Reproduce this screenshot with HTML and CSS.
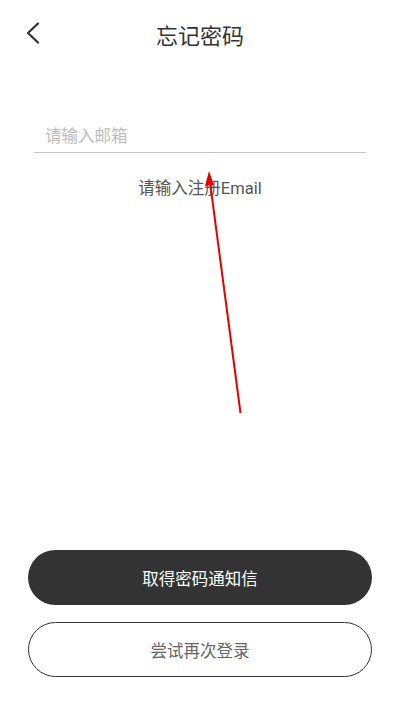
FILE: index.html
```html
<!DOCTYPE html>
<html lang="zh-CN">

<head>
    <meta charset="UTF-8">
    <meta name="viewport" content="width=device-width, initial-scale=1.0">
    <title>忘记密码</title>
    <link rel="stylesheet" href="styles.css">
</head>

<body>
    <div class="page">
        <div class="header">
            <button class="back" aria-label="返回">
                <svg width="14" height="22" viewBox="0 0 14 22">
                    <path d="M12 1.5 L2 11 L12 20.5" fill="none" stroke="#333" stroke-width="2.2" stroke-linecap="round" stroke-linejoin="round"/>
                </svg>
            </button>
            <h1>忘记密码</h1>
        </div>

        <div class="form">
            <input type="text" class="email" placeholder="请输入邮箱">
            <p class="hint">请输入注册Email</p>
        </div>

        <div class="actions">
            <button class="btn primary">取得密码通知信</button>
            <button class="btn outline">尝试再次登录</button>
        </div>

        <!-- annotation arrow drawn over the screen -->
        <svg class="arrow" width="400" height="711" viewBox="0 0 400 711">
            <line x1="240.5" y1="413" x2="210" y2="182" stroke="#e60000" stroke-width="2"/>
            <polygon points="209,171 205,186 214,185" fill="#e60000"/>
        </svg>
    </div>
</body>

</html>
```

FILE: styles.css
```css
* {
    box-sizing: border-box;
}

body {
    margin: 0;
    font-family: Roboto, "Noto Sans CJK SC", sans-serif;
    background: #fff;
    color: #333;
}

.page {
    position: relative;
    width: 400px;
    height: 711px;
    display: flex;
    flex-direction: column;
}

.header {
    position: relative;
    height: 68px;
    display: flex;
    align-items: center;
    justify-content: center;
}

.header h1 {
    margin: 0;
    font-size: 22px;
    font-weight: 400;
    color: #333;
}

.back {
    position: absolute;
    left: 26px;
    top: 22px;
    padding: 0;
    border: none;
    background: none;
    line-height: 0;
}

.form {
    padding: 0 34px;
    margin-top: 49px;
}

.email {
    display: block;
    width: 100%;
    height: 36px;
    padding: 4px 0 0 11px;
    border: none;
    border-bottom: 1px solid #c4c4c4;
    font-family: inherit;
    font-size: 16.5px;
    color: #333;
    outline: none;
}

.email::placeholder {
    color: #bdbdbd;
}

.hint {
    margin: 24px 0 0;
    text-align: center;
    font-size: 16.5px;
    line-height: 24px;
    color: #555;
}

.actions {
    margin-top: auto;
    padding: 0 28px 34px;
    display: flex;
    flex-direction: column;
    gap: 17px;
}

.btn {
    height: 55px;
    border-radius: 28px;
    font-family: inherit;
    font-size: 16.5px;
}

.primary {
    background: #333;
    color: #fff;
    border: none;
}

.outline {
    background: #fff;
    color: #666;
    border: 1px solid #333;
}

.arrow {
    position: absolute;
    left: 0;
    top: 0;
    pointer-events: none;
}
```
